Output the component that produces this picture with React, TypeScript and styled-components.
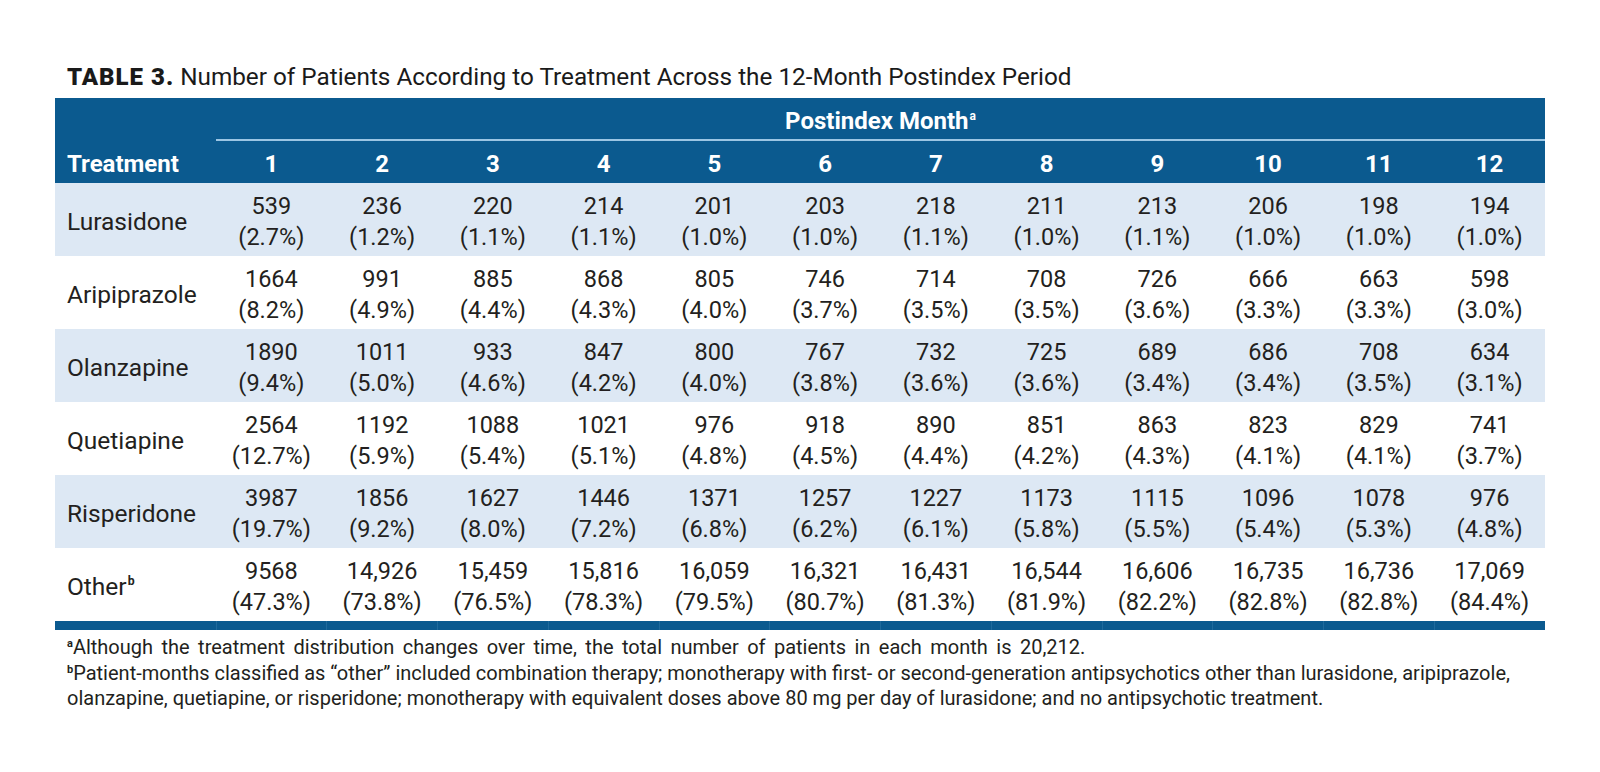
import React from "react";
import styled, { createGlobalStyle } from "styled-components";

const Global = createGlobalStyle`
  html, body { margin: 0; padding: 0; background: #ffffff; }
  body { font-family: Roboto, "Liberation Sans", Arial, sans-serif; color: #231f20; }
`;

const BLUE = "#0b5a8f";
const LIGHT = "#dde8f4";

const Page = styled.div`
  width: 1600px;
  height: 772px;
  box-sizing: border-box;
  padding: 63px 0 0 55px;
`;

const Title = styled.h1`
  margin: 0 0 7px 0;
  padding-left: 12px;
  font-size: 24px;
  line-height: 28px;
  font-weight: 400;
  color: #1a1a1a;
  white-space: nowrap;
`;

const TitleLabel = styled.span`
  font-weight: 900;
  letter-spacing: 1px;
  margin-right: 6px;
`;

const TitleText = styled.span`
  font-size: 24.3px;
`;

const Table = styled.table`
  width: 1490px;
  border-collapse: collapse;
  table-layout: fixed;
`;

const HeadRow = styled.tr<{ $h: number }>`
  height: ${(p) => p.$h}px;
  background: ${BLUE};
`;

const Th = styled.th<{ $left?: boolean; $rule?: boolean }>`
  padding: 4px 0 0 ${(p) => (p.$left ? "12px" : "0")};
  text-align: ${(p) => (p.$left ? "left" : "center")};
  color: #ffffff;
  font-size: 24px;
  font-weight: 700;
  line-height: 28px;
  border-bottom: ${(p) => (p.$rule ? "2px solid #9cc6e4" : "none")};
  white-space: nowrap;
`;

const Sup = styled.sup`
  font-size: 0.5em;
  font-weight: 700;
  vertical-align: 0.75em;
  line-height: 0;
  margin-left: 1px;
`;

const BodyRow = styled.tr<{ $shade: boolean }>`
  height: 73px;
  background: ${(p) => (p.$shade ? LIGHT : "#ffffff")};
`;

const Label = styled.td`
  padding: 4px 0 0 12px;
  font-size: 24.5px;
  line-height: 30px;
  white-space: nowrap;
  color: #231f20;
`;

const Cell = styled.td`
  padding: 4px 0 0 0;
  text-align: center;
  font-size: 23.5px;
  line-height: 31px;
  white-space: nowrap;
  color: #231f20;
`;

const Line = styled.div``;

const BarRow = styled.tr`
  height: 9px;
  background: ${BLUE};
`;

const BarCell = styled.td`
  padding: 0;
  border-left: 1px solid #1f6a9c;
  &:first-child { border-left: none; }
`;

const Notes = styled.div`
  margin-top: 5px;
  padding-left: 12px;
  font-size: 20px;
  line-height: 25.5px;
  color: #231f20;
  white-space: nowrap;
`;

const NoteLine = styled.div<{ $spread?: boolean }>`
  word-spacing: ${(p) => (p.$spread ? "3.5px" : "normal")};
`;

const NoteSup = styled.sup`
  font-size: 0.55em;
  font-weight: 700;
  vertical-align: 0.6em;
  line-height: 0;
`;

type Row = { name: string; sup?: string; values: [string, string][] };

const rows: Row[] = [
  {
    name: "Lurasidone",
    values: [
      ["539", "2.7%"], ["236", "1.2%"], ["220", "1.1%"], ["214", "1.1%"], ["201", "1.0%"], ["203", "1.0%"],
      ["218", "1.1%"], ["211", "1.0%"], ["213", "1.1%"], ["206", "1.0%"], ["198", "1.0%"], ["194", "1.0%"],
    ],
  },
  {
    name: "Aripiprazole",
    values: [
      ["1664", "8.2%"], ["991", "4.9%"], ["885", "4.4%"], ["868", "4.3%"], ["805", "4.0%"], ["746", "3.7%"],
      ["714", "3.5%"], ["708", "3.5%"], ["726", "3.6%"], ["666", "3.3%"], ["663", "3.3%"], ["598", "3.0%"],
    ],
  },
  {
    name: "Olanzapine",
    values: [
      ["1890", "9.4%"], ["1011", "5.0%"], ["933", "4.6%"], ["847", "4.2%"], ["800", "4.0%"], ["767", "3.8%"],
      ["732", "3.6%"], ["725", "3.6%"], ["689", "3.4%"], ["686", "3.4%"], ["708", "3.5%"], ["634", "3.1%"],
    ],
  },
  {
    name: "Quetiapine",
    values: [
      ["2564", "12.7%"], ["1192", "5.9%"], ["1088", "5.4%"], ["1021", "5.1%"], ["976", "4.8%"], ["918", "4.5%"],
      ["890", "4.4%"], ["851", "4.2%"], ["863", "4.3%"], ["823", "4.1%"], ["829", "4.1%"], ["741", "3.7%"],
    ],
  },
  {
    name: "Risperidone",
    values: [
      ["3987", "19.7%"], ["1856", "9.2%"], ["1627", "8.0%"], ["1446", "7.2%"], ["1371", "6.8%"], ["1257", "6.2%"],
      ["1227", "6.1%"], ["1173", "5.8%"], ["1115", "5.5%"], ["1096", "5.4%"], ["1078", "5.3%"], ["976", "4.8%"],
    ],
  },
  {
    name: "Other",
    sup: "b",
    values: [
      ["9568", "47.3%"], ["14,926", "73.8%"], ["15,459", "76.5%"], ["15,816", "78.3%"], ["16,059", "79.5%"],
      ["16,321", "80.7%"], ["16,431", "81.3%"], ["16,544", "81.9%"], ["16,606", "82.2%"], ["16,735", "82.8%"],
      ["16,736", "82.8%"], ["17,069", "84.4%"],
    ],
  },
];

const months = Array.from({ length: 12 }, (_, i) => String(i + 1));

export default function App() {
  return (
    <Page>
      <Global />
      <Title>
        <TitleLabel>TABLE 3.</TitleLabel>
        <TitleText>Number of Patients According to Treatment Across the 12-Month Postindex Period</TitleText>
      </Title>
      <Table>
        <colgroup>
          <col style={{ width: 161 }} />
          {months.map((m) => (
            <col key={m} />
          ))}
        </colgroup>
        <thead>
          <HeadRow $h={42}>
            <Th $left />
            <Th colSpan={12} $rule>
              Postindex Month<Sup>a</Sup>
            </Th>
          </HeadRow>
          <HeadRow $h={43}>
            <Th $left>Treatment</Th>
            {months.map((m) => (
              <Th key={m}>{m}</Th>
            ))}
          </HeadRow>
        </thead>
        <tbody>
          {rows.map((r, i) => (
            <BodyRow key={r.name} $shade={i % 2 === 0}>
              <Label>
                {r.name}
                {r.sup && <Sup>{r.sup}</Sup>}
              </Label>
              {r.values.map(([n, p], j) => (
                <Cell key={j}>
                  <Line>{n}</Line>
                  <Line>({p})</Line>
                </Cell>
              ))}
            </BodyRow>
          ))}
          <BarRow>
            <BarCell />
            {months.map((m) => (
              <BarCell key={m} />
            ))}
          </BarRow>
        </tbody>
      </Table>
      <Notes>
        <NoteLine $spread>
          <NoteSup>a</NoteSup>Although the treatment distribution changes over time, the total number of patients in each month is 20,212.
        </NoteLine>
        <NoteLine>
          <NoteSup>b</NoteSup>Patient-months classified as “other” included combination therapy; monotherapy with first- or second-generation antipsychotics other than lurasidone, aripiprazole,
        </NoteLine>
        <NoteLine>
          olanzapine, quetiapine, or risperidone; monotherapy with equivalent doses above 80 mg per day of lurasidone; and no antipsychotic treatment.
        </NoteLine>
      </Notes>
    </Page>
  );
}
